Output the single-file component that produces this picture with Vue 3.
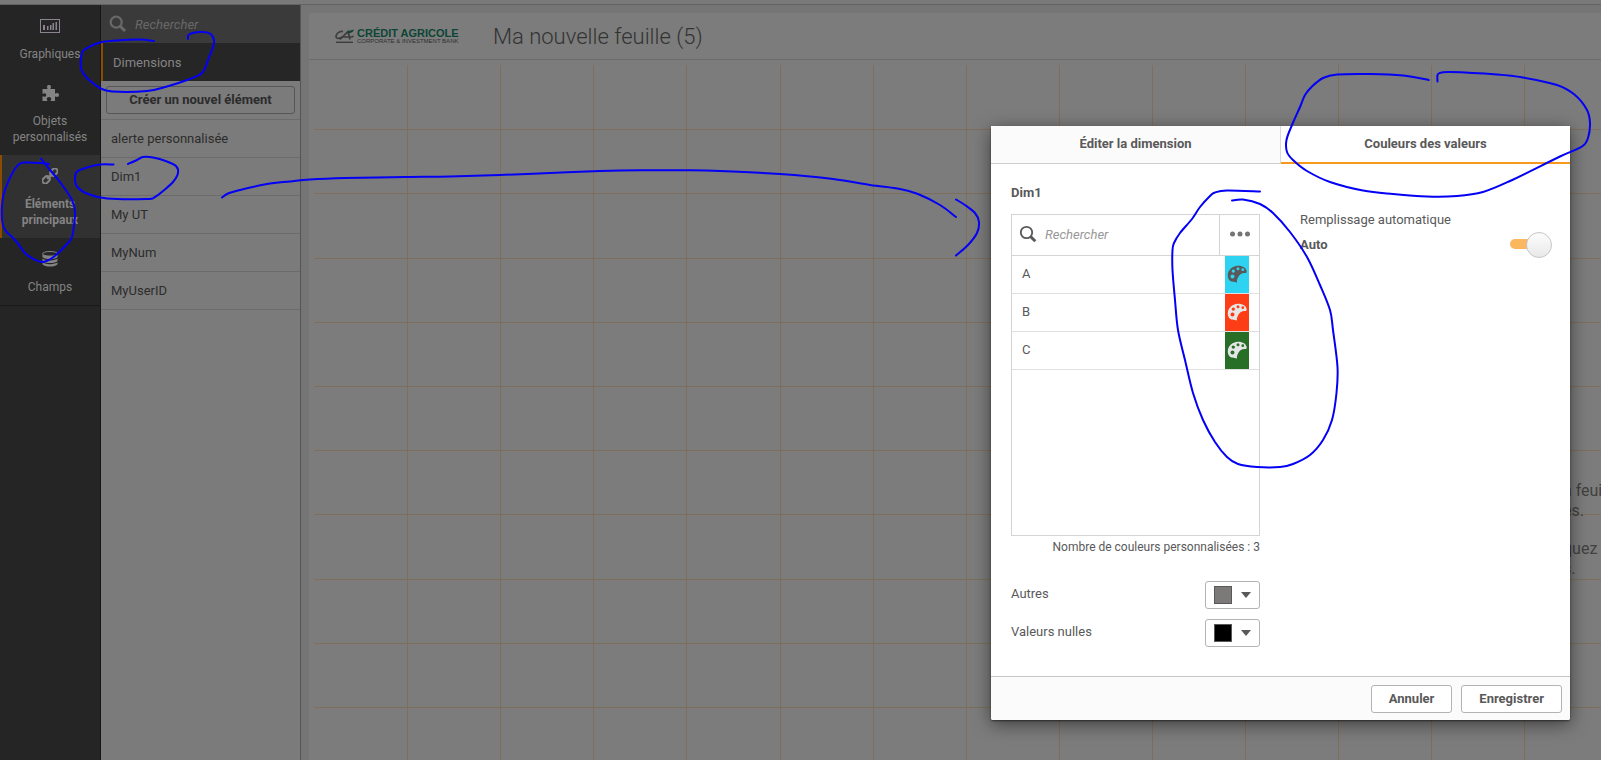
<script setup>
import { ref } from 'vue'

const categories = [
  { id: 'charts', lines: ['Graphiques'] },
  { id: 'custom', lines: ['Objets', 'personnalisés'] },
  { id: 'master', lines: ['Éléments', 'principaux'] },
  { id: 'fields', lines: ['Champs'] },
]
const current = ref('master')
const dimensions = ['alerte personnalisée', 'Dim1', 'My UT', 'MyNum', 'MyUserID']

const values = [
  { name: 'A', tone: 'cyan' },
  { name: 'B', tone: 'red' },
  { name: 'C', tone: 'green' },
]
const auto = ref(true)

const columns = Array.from({ length: 13 }, (_, i) => Math.round(93.1 * (i + 1)))
const rows = Array.from({ length: 10 }, (_, i) => Math.round(64.2 * (i + 1)))

// Pen strokes drawn over the page, each a list of points.
const strokes = [
  [[154,41],[140,39.5],[117,40.5],[100,42.5],[88,47.5],[82,53],[81,68],[87,78],[100,88],[112,91.5],[147,91],[167,86.5],[187,80],[202,73],[208,60],[213,47],[214,40],[210,33.5],[200,32],[189,34.5],[188,39]],
  [[41,158.5],[50,170],[60,182],[72,200],[75,212],[74,225],[72,237],[68,243],[53.5,257],[42.5,262],[33.5,259],[25,253],[15,240],[5,230],[2,220],[2.5,200],[6,187],[13,172],[20,163.5],[28,162.5],[40,163],[49,164]],
  [[113.5,164.5],[100,164.5],[87,167.5],[77,171.5],[75,178],[77,186.5],[88,194],[107,198.5],[147,199],[155,197],[163,191],[173,182],[178,173],[176,166],[167,161.5],[153,157.5],[143,157],[137,160],[128,164]],
  [[222,197.5],[228,193.5],[240,190],[267,184],[290,181.5],[310,179.5],[345,178],[405,177],[450,176.5],[500,175],[550,173],[600,171],[640,170.2],[683,170.3],[720,171],[780,174],[833,179],[870,185],[900,189],[918,194],[940,205],[956,217]],
  [[956,199.5],[965,205],[975,213],[979,222],[977,233],[968,245],[956,255.5]],
  [[1428.7,80],[1403,75.5],[1370,74],[1337,74.5],[1323,78],[1312,86.5],[1305,95],[1300,107],[1292,125],[1286.5,140],[1287,152],[1293,160],[1307,171],[1330,182],[1363,190.5],[1393,194],[1427,196.5],[1457,196],[1483,192],[1510,181],[1560,156.5],[1582,146.5],[1588,138],[1590,123],[1587,110],[1575,95],[1557,85],[1523,77.5],[1497,74.5],[1450,72],[1440,73],[1437.5,75],[1437.5,81.5]],
  [[1260,191.5],[1227,190.5],[1215,192.5],[1210,196],[1200,207],[1192,219],[1180,233],[1174,243],[1172.5,250],[1172.5,270],[1175,300],[1178,330],[1185,360],[1193,393],[1203,420],[1215,442],[1227,457],[1238,464],[1257,467],[1280,467],[1293,464],[1310,455],[1323,440],[1332,420],[1336.5,393],[1337.5,367],[1333,330],[1330,310],[1320,285],[1307,257],[1290,232],[1273,213],[1260,204],[1243,199.5],[1232,200.5]],
]

// Catmull-Rom spline through the points, written as cubic curves.
function smooth(p) {
  let d = `M${p[0]}`
  for (let i = 0; i < p.length - 1; i++) {
    const a = p[i - 1] || p[i], b = p[i], c = p[i + 1], e = p[i + 2] || c
    d += `C${b[0] + (c[0] - a[0]) / 6},${b[1] + (c[1] - a[1]) / 6} ${c[0] - (e[0] - b[0]) / 6},${c[1] - (e[1] - b[1]) / 6} ${c}`
  }
  return d
}
</script>

<template>
  <div class="app">
    <div class="topbar"></div>
    <div class="workspace">
      <nav class="rail">
        <button v-for="c in categories" :key="c.id" type="button" class="cat" :class="{ active: current === c.id }" @click="current = c.id">
          <svg v-if="c.id === 'charts'" class="cat-icon" viewBox="0 0 20 16" width="20" height="16">
            <rect x="0.5" y="1.5" width="19" height="13" fill="none" stroke="#8b8390" />
            <path d="M3 7h2v5H3zM7 8h1.500v4H7zM10 7h1.500v5H10zM12.500 5h1.500v7h-1.500zM15.500 4h1.500v8h-1.500z" fill="#8b8390" />
          </svg>
          <svg v-else-if="c.id === 'custom'" class="cat-icon" viewBox="0 0 17 16" width="17" height="16">
            <path d="M.5 4H5.300C5.900 3.300 5 2.600 5 1.700 5 .6 5.900 0 7 0s2 .6 2 1.700c0 .9-.9 1.600-.3 2.300H13v4.300c.6.600 1.200-.3 2.200-.3 1.100 0 1.800.9 1.800 2s-.7 2-1.800 2c-1 0-1.600-1-2.200-.3V16H8.900c-.7-.6.300-1.200.3-2.200C9.200 12.700 8.200 12 7 12s-2.200.7-2.200 1.800c0 1 1 1.600.3 2.200H.5v-4.500c.6-.6 1.200.3 2 .3 1 0 1.700-.8 1.700-1.800S3.500 8.200 2.500 8.200c-.8 0-1.400.9-2 .3z" fill="currentColor" />
          </svg>
          <svg v-else-if="c.id === 'master'" class="cat-icon" viewBox="0 0 16 16" width="16" height="16">
            <g fill="none" stroke="currentColor" transform="rotate(-45 8 8)">
              <rect x="-1.500" y="5.200" width="8" height="5.600" rx="2.800" stroke-width="2" />
              <rect x="9.500" y="5.200" width="8" height="5.600" rx="2.800" stroke-width="2" />
              <path d="M4 8h8" stroke-width="2.500" />
            </g>
          </svg>
          <svg v-else class="cat-icon" viewBox="0 0 16 16" width="16" height="16">
            <path d="M.5 3v10.200C1.500 15 5 15.500 8 15.500s6.500-.5 7.500-2.300V3z" fill="currentColor" />
            <ellipse cx="8" cy="2.800" rx="7.500" ry="2.300" fill="#252525" stroke="currentColor" />
            <path d="M0 6.500c2 2 5 2.300 8 2.300s6-.3 8-2.300M0 10.300c2 2 5 2.300 8 2.300s6-.3 8-2.300" fill="none" stroke="#252525" stroke-width="1.200" />
          </svg>
          <span class="cat-label"><span v-for="l in c.lines" :key="l">{{ l }}</span></span>
        </button>
      </nav>

      <aside class="panel">
        <label class="search dark">
          <svg viewBox="0 0 18 18" width="18" height="18"><circle cx="7.200" cy="7.200" r="5.500" fill="none" stroke="currentColor" stroke-width="2.200" /><path d="M11.200 11.200l4.800 4.800" stroke="currentColor" stroke-width="3" /></svg>
          <input type="search" placeholder="Rechercher" aria-label="Rechercher un élément" />
        </label>
        <button type="button" class="section">Dimensions</button>
        <div class="create"><button type="button">Créer un nouvel élément</button></div>
        <ul class="dims">
          <li v-for="d in dimensions" :key="d"><button type="button">{{ d }}</button></li>
        </ul>
      </aside>

      <main class="sheet">
        <header class="sheet-head">
          <div class="logo">
            <svg viewBox="0 0 20 15" width="20" height="15">
              <path d="M8 2.500C4 2 1 5 1 7.300c0 3 4 2.600 7 .2M5 10.500L13 2.500l2 8M8 8h8c1 0 2-.5 2.500-1" fill="none" stroke="#3d3d3d" stroke-width="1.700" />
              <path d="M12.500 3.500C14 1.500 16 1 19 .8 18.500 2.500 17 4 14 4.200z" fill="#0d4536" />
              <path d="M1 13.300h17" stroke="#3d3d3d" stroke-width="1.400" />
            </svg>
            <div class="logo-text"><span class="brand">CRÉDIT AGRICOLE</span><span class="sub">CORPORATE &amp; INVESTMENT BANK</span></div>
          </div>
          <h1>Ma nouvelle feuille (5)</h1>
        </header>
        <div class="canvas">
          <svg class="grid" width="100%" height="100%">
            <rect v-for="x in columns" :key="'c' + x" :x="x" y="0" width="1" height="100%" />
            <rect v-for="y in rows" :key="'r' + y" x="0" :y="y" width="100%" height="1" />
          </svg>
          <div class="hint">
            <p>a feui<br />es.</p>
            <p>quez<br />s.</p>
          </div>
        </div>
      </main>
    </div>

    <section class="dialog" role="dialog" aria-label="Dim1">
      <div class="tabs" role="tablist">
        <button type="button" role="tab" aria-selected="false">Éditer la dimension</button>
        <button type="button" role="tab" aria-selected="true" class="on">Couleurs des valeurs</button>
      </div>
      <div class="body">
        <div class="left">
          <h2>Dim1</h2>
          <div class="box">
            <div class="box-head">
              <label class="search light">
                <svg viewBox="0 0 18 18" width="18" height="18"><circle cx="7.500" cy="7.500" r="5.700" fill="none" stroke="currentColor" stroke-width="1.800" /><path d="M11.500 11.500l4.800 4.800" stroke="currentColor" stroke-width="3" /></svg>
                <input type="search" placeholder="Rechercher" aria-label="Rechercher une valeur" />
              </label>
              <button type="button" class="more" aria-label="Plus">
                <svg viewBox="0 0 20 6" width="20" height="6" fill="#757575"><circle cx="2.500" cy="3" r="2.500" /><circle cx="10" cy="3" r="2.500" /><circle cx="17.500" cy="3" r="2.500" /></svg>
              </button>
            </div>
            <div v-for="v in values" :key="v.name" class="value">
              <span>{{ v.name }}</span>
              <button type="button" class="swatch" :class="v.tone" :aria-label="'Couleur de ' + v.name">
                <svg viewBox="0 0 20 18" width="20" height="18">
                  <path fill-rule="evenodd" fill="currentColor" d="M11 .8C5 1 .8 5.500.8 10.400c0 3.300 1.800 5.800 4.600 6.100 1.500.2 3.200 1 4.400 1 .8-.1-.3-1.300.2-2.600C11 12 12.500 9.300 15.500 8.300c1.600-.4 4.200.4 4.200-1.500C19.700 3 15.500.7 11 .8zM5.500 9.400a2 2 0 1 1 0 4 2 2 0 0 1 0-4zM6.300 4.400a1.700 1.700 0 1 1 0 3.400 1.700 1.700 0 0 1 0-3.400zM11 2.300a1.500 1.500 0 1 1 0 3 1.500 1.500 0 0 1 0-3zM15.800 3.300a1.400 1.400 0 1 1 0 2.800 1.400 1.400 0 0 1 0-2.800z" />
                </svg>
              </button>
            </div>
          </div>
          <p class="count">Nombre de couleurs personnalisées : 3</p>
          <div class="pick">
            <span id="others">Autres</span>
            <button type="button" aria-labelledby="others"><i class="chip grey"></i><svg viewBox="0 0 10 6" width="10" height="6"><path d="M0 0h10L5 6z" fill="#595959" /></svg></button>
          </div>
          <div class="pick">
            <span id="nulls">Valeurs nulles</span>
            <button type="button" aria-labelledby="nulls"><i class="chip black"></i><svg viewBox="0 0 10 6" width="10" height="6"><path d="M0 0h10L5 6z" fill="#595959" /></svg></button>
          </div>
        </div>
        <div class="right">
          <span class="fill-title">Remplissage automatique</span>
          <div class="toggle-row">
            <label for="auto">Auto</label>
            <input id="auto" v-model="auto" type="checkbox" class="toggle" />
          </div>
        </div>
      </div>
      <footer>
        <button type="button">Annuler</button>
        <button type="button">Enregistrer</button>
      </footer>
    </section>

    <svg class="ink" viewBox="0 0 1601 760" width="1601" height="760">
      <path v-for="(s, i) in strokes" :key="i" :d="smooth(s)" />
    </svg>
  </div>
</template>

<style>
html, body { margin: 0; background: #7b7b7b; }
</style>

<style scoped>
* { box-sizing: border-box; }
button, input { font: inherit; color: inherit; margin: 0; }
button { background: none; border: 0; padding: 0; cursor: pointer; }
p, h1, h2, ul { margin: 0; padding: 0; list-style: none; }
svg { display: block; flex: none; }

.app {
  position: relative;
  min-height: 100vh;
  overflow: hidden;
  display: flex;
  flex-direction: column;
  background: #757575;
  color: #2c2c2c;
  font-family: Roboto, "Liberation Sans", sans-serif;
  font-size: 13px;
}
.topbar { height: 5px; border-bottom: 1px solid #636363; background: #797979; }
.workspace { flex: 1; display: flex; }

.rail { width: 101px; background: #252525; border-right: 1px solid #161616; font-size: 12px; }
.cat {
  display: flex;
  flex-direction: column;
  align-items: center;
  gap: 12px;
  width: 100%;
  padding: 13px 0 10px;
  color: #848484;
}
.cat:last-child { border-bottom: 1px solid #191919; }
.cat.active { background: #313131; font-weight: bold; box-shadow: inset 2px 0 #8a4d00; }
.cat-label { display: flex; flex-direction: column; line-height: 16px; }

.panel { width: 200px; background: #7b7b7b; border-right: 1px solid #555; }
.search { display: flex; align-items: center; gap: 8px; flex: 1; }
.search input { width: 100%; min-width: 0; border: 0; background: none; outline: 0; padding: 0; }
.search input::placeholder { color: inherit; opacity: 1; font-style: italic; }
.dark { height: 38px; padding: 0 8px; background: #3a3a3a; color: #686868; }
.section {
  display: block;
  width: 100%;
  height: 38px;
  padding-left: 10px;
  border-left: 2px solid #8a4d00;
  background: #262626;
  color: #848484;
  text-align: left;
}
.create { padding: 5px; border-bottom: 1px solid #6b6b6b; }
.create button { width: 100%; height: 28px; padding-bottom: 2px; border: 1px solid #565656; border-radius: 3px; font-weight: bold; }
.dims li { height: 38px; border-bottom: 1px solid #6b6b6b; }
.dims button { width: 100%; height: 100%; padding-left: 10px; text-align: left; }

.sheet { flex: 1; min-width: 0; margin: 8px 0 0 8px; display: flex; flex-direction: column; background: #7c7c7c; }
.sheet-head { display: flex; align-items: center; gap: 34px; height: 47px; padding-left: 26px; border-bottom: 1px solid #6c6c6c; }
.logo { display: flex; align-items: center; gap: 2px; width: 124px; }
.logo-text { display: flex; flex-direction: column; white-space: nowrap; font-family: "Liberation Sans", sans-serif; }
.brand { font-size: 11px; line-height: 10px; font-weight: bold; color: #0d4536; }
.sub { font-size: 6px; line-height: 6px; color: #2f2f2f; }
h1 { font-size: 22px; font-weight: 300; color: #333; }
.canvas { position: relative; flex: 1; margin: 5px 0 0 5px; overflow: hidden; }
.grid { position: absolute; inset: 0; fill: #806e5c; }
.hint {
  position: absolute;
  top: 416px;
  left: 1249px;
  display: flex;
  flex-direction: column;
  gap: 18px;
  color: #414141;
  font-size: 16px;
  line-height: 20px;
  white-space: nowrap;
}

.dialog {
  position: absolute;
  top: 126px;
  right: 31px;
  width: 579px;
  display: flex;
  flex-direction: column;
  background: #fff;
  color: #595959;
  border-radius: 2px;
  box-shadow: 0 1px 2px rgba(0, 0, 0, .5), 0 4px 18px rgba(0, 0, 0, .5);
}
.tabs { display: flex; height: 38px; }
.tabs button { flex: 1; padding-bottom: 2px; font-weight: bold; background: #fbfbfb; border-bottom: 1px solid #ccc; border-right: 1px solid #d9d9d9; }
.tabs .on { background: #fff; border-right: 0; border-bottom: 2px solid #f8981d; }
.body { display: flex; gap: 40px; padding: 20px; height: 512px; }
.left { width: 249px; }
h2 { font-size: 13px; line-height: 18px; margin-bottom: 12px; }
.box { height: 322px; border: 1px solid #d4d4d4; }
.box-head { display: flex; height: 41px; border-bottom: 1px solid #d4d4d4; }
.light { padding: 0 7px 2px; color: #999; }
.light svg { color: #595959; }
.more { display: grid; place-items: center; width: 40px; padding-bottom: 2px; border-left: 1px solid #d4d4d4; }
.value { display: flex; justify-content: space-between; height: 38px; padding: 0 10px; border-bottom: 1px solid #e0e0e0; line-height: 36px; }
.swatch { display: grid; place-items: center; width: 24px; padding-bottom: 2px; }
.cyan { background: #2dd3f0; color: #595959; }
.red { background: #fc3d16; color: #e6e6e6; }
.green { background: #276e27; color: #e6e6e6; }
.count { margin: 3px 0 26px; font-size: 12px; line-height: 16px; text-align: right; }
.pick { display: flex; justify-content: space-between; height: 28px; margin-bottom: 10px; line-height: 26px; }
.pick button { display: flex; align-items: center; gap: 9px; width: 55px; padding-left: 8px; border: 1px solid #b3b3b3; border-radius: 3px; }
.chip { width: 18px; height: 18px; border: 1px solid #595959; }
.grey { background: #7b7a78; }
.black { background: #000; }
.right { flex: 1; padding-top: 28px; }
.fill-title { display: block; line-height: 16px; }
.toggle-row { display: flex; align-items: center; justify-content: space-between; height: 24px; margin-top: 4px; font-weight: bold; }
.toggle { appearance: none; position: relative; width: 40px; height: 10px; border-radius: 5px; background: #ccc; }
.toggle:checked { background: #fbb660; }
.toggle::after {
  content: "";
  position: absolute;
  top: -7px;
  left: 0;
  width: 24px;
  height: 24px;
  border: 1px solid #c6c6c6;
  border-radius: 50%;
  background: linear-gradient(#fcfcfc, #e9e9e9);
}
.toggle:checked::after { left: 16px; }
footer { display: flex; justify-content: flex-end; gap: 9px; height: 44px; padding: 8px; background: #fbfbfb; border-top: 1px solid #c6c6c6; border-radius: 0 0 2px 2px; }
footer button { height: 28px; padding: 0 17px 2px; border: 1px solid #b3b3b3; border-radius: 3px; background: #fff; font-weight: bold; }

.ink { position: absolute; top: 0; left: 0; fill: none; stroke: #0400f5; stroke-width: 2; stroke-linecap: round; stroke-linejoin: round; pointer-events: none; }
</style>
